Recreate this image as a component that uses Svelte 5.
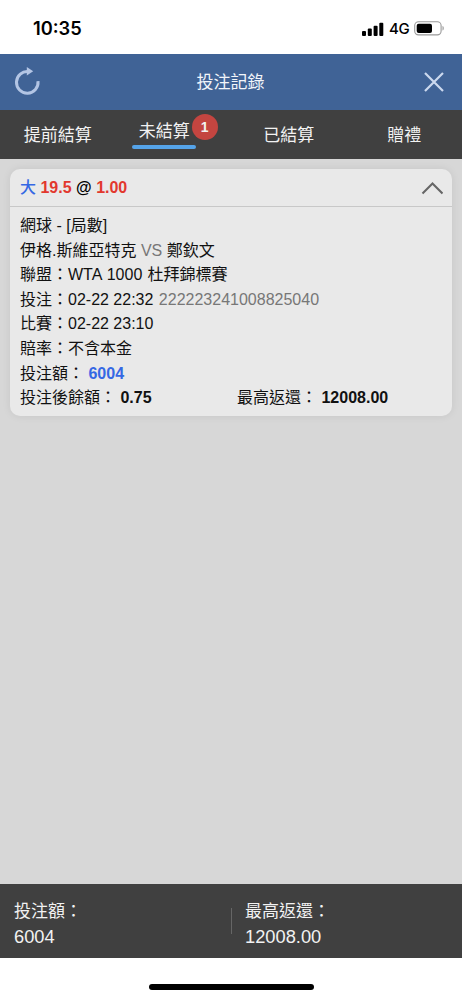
<script>
  const tabs = [
    { label: '提前結算' },
    { label: '未結算', count: 1, active: true },
    { label: '已結算' },
    { label: '贈禮' }
  ];
  const totals = [
    { label: '投注額：', value: '6004' },
    { label: '最高返還：', value: '12008.00' }
  ];
</script>

<div class="screen">
  <div class="status">
    <span class="time">10:35</span>
    <div class="indicators">
      <svg class="signal" width="22" height="14" viewBox="0 0 22 14">
        <rect x="0" y="9" width="4" height="5" rx="1" />
        <rect x="5.8" y="6.5" width="4" height="7.5" rx="1" />
        <rect x="11.6" y="3.7" width="4" height="10.3" rx="1" />
        <rect x="17.3" y="0.8" width="4" height="13.2" rx="1" />
      </svg>
      <span class="network">4G</span>
      <svg width="31" height="15" viewBox="0 0 31 15">
        <rect x="0.7" y="0.7" width="26.4" height="13.2" rx="3.8" fill="none" stroke="#999" stroke-width="1.1" />
        <rect x="2.7" y="2.7" width="15.3" height="9.2" rx="2" />
        <path d="M28.5 5.1c1.7.6 1.7 3.9 0 4.5z" fill="#999" />
      </svg>
    </div>
  </div>

  <header>
    <svg width="28" height="30" viewBox="0 0 28 30">
      <path d="M15.6 4.7A10.8 10.8 0 1 0 25 14.2" fill="none" stroke="#b3c5e4" stroke-width="3" />
      <path d="M13.8 0L20.2 4.2L13.8 8.6Z" fill="#b3c5e4" />
    </svg>
    <h1>投注記錄</h1>
    <svg width="20" height="20" viewBox="0 0 20 20">
      <path d="M1 1L19 19M19 1L1 19" stroke="#ccd9ef" stroke-width="2.2" />
    </svg>
  </header>

  <nav>
    {#each tabs as tab}
      <div class="tab" class:active={tab.active}>
        <span class="label">{tab.label}{#if tab.count}<b class="badge">{tab.count}</b>{/if}</span>
        {#if tab.active}<i class="marker"></i>{/if}
      </div>
    {/each}
  </nav>

  <main>
    <article>
      <div class="head">
        <div><b class="pick">大</b> <b class="red">19.5</b> <b class="at">@</b> <b class="red">1.00</b></div>
        <svg width="22" height="14" viewBox="0 0 22 14">
          <path d="M1.5 12.6L11.5 2.4L21.5 12.6" fill="none" stroke="#666" stroke-width="2.1" />
        </svg>
      </div>
      <div class="details">
        <p>網球 - [局數]</p>
        <p>伊格.斯維亞特克 <span class="muted">VS</span> 鄭欽文</p>
        <p class="league">聯盟：WTA 1000 杜拜錦標賽</p>
        <p>投注：02-22 22:32 <span class="muted number">222223241008825040</span></p>
        <p>比賽：02-22 23:10</p>
        <p>賠率：不含本金</p>
        <p>投注額： <b class="stake">6004</b></p>
        <div class="split">
          <p>投注後餘額： <b>0.75</b></p>
          <p>最高返還： <b>12008.00</b></p>
        </div>
      </div>
    </article>
  </main>

  <footer>
    {#each totals as total}
      <div class="total">
        <span class="caption">{total.label}</span>
        <span class="amount">{total.value}</span>
      </div>
    {/each}
  </footer>
  <div class="home"><i></i></div>
</div>

<style>
  :global(body) {
    margin: 0;
    background: #fff;
  }
  .screen {
    display: flex;
    flex-direction: column;
    width: 462px;
    height: 1000px;
    overflow: hidden;
    font-family: "Liberation Sans", "Noto Sans CJK TC", sans-serif;
    font-size: 16px;
    color: #111;
  }
  .status {
    display: flex;
    justify-content: space-between;
    height: 54px;
    padding: 0 17px 0 33px;
    box-sizing: border-box;
    color: #000;
    font-family: Inter, sans-serif;
  }
  .time {
    font-size: 18.3px;
    font-weight: 600;
    line-height: 57px;
  }
  .indicators {
    display: flex;
    align-items: center;
    height: 57px;
  }
  .network {
    width: 20px;
    margin: 0 5px 0 5px;
    font-size: 15px;
    font-weight: 500;
    letter-spacing: -0.4px;
    white-space: nowrap;
  }
  header {
    display: flex;
    align-items: center;
    justify-content: space-between;
    height: 56px;
    padding: 0 18px 0 13px;
    background: #406396;
  }
  h1 {
    margin: 0;
    padding-right: 4px;
    padding-top: 1px;
    font-size: 17px;
    font-weight: 400;
    line-height: 24px;
    color: #f2f5fa;
  }
  nav {
    display: grid;
    grid-template-columns: repeat(4, 1fr);
    height: 49px;
    background: #404040;
    color: #f2f2f2;
    font-size: 17px;
  }
  .tab {
    display: flex;
    flex-direction: column;
    align-items: center;
    padding-top: 14px;
  }
  .label {
    position: relative;
    line-height: 24px;
  }
  .active {
    padding-top: 10px;
    padding-right: 18px;
  }
  .marker {
    width: 64px;
    height: 4px;
    border-radius: 2px;
    background: #55a3e8;
  }
  .active .label {
    height: 25px;
  }
  .badge {
    position: absolute;
    left: 53px;
    top: -6px;
    width: 26px;
    height: 26px;
    border-radius: 50%;
    background: #c44540;
    font-size: 14px;
    line-height: 26px;
    text-align: center;
  }
  main {
    flex: 1;
    padding: 10px;
    background: #d7d7d7;
  }
  article {
    height: 247px;
    border-radius: 10px;
    background: #e9e9e9;
    box-shadow: 0 0 8px rgba(0, 0, 0, 0.08);
  }
  .head {
    display: flex;
    align-items: center;
    justify-content: space-between;
    height: 37px;
    padding: 0 9px 0 10px;
    border-bottom: 1px solid #c8c8c8;
  }
  .head div {
    margin-top: -3px;
  }
  .pick {
    color: #3568e4;
    font-weight: 500;
  }
  .at {
    color: #000;
  }
  .red {
    color: #e2382e;
  }
  .details {
    padding: 7px 10px;
  }
  p {
    margin: 0;
    line-height: 24.6px;
    white-space: nowrap;
  }
  .league {
    word-spacing: 0.8px;
  }
  .muted {
    color: #777;
  }
  .number {
    margin-left: 1px;
  }
  .stake {
    color: #3568e4;
  }
  .split {
    display: grid;
    grid-template-columns: 217px 1fr;
  }
  footer {
    display: grid;
    grid-template-columns: 231px 231px;
    align-items: center;
    height: 74px;
    background: #404040;
    color: #f2f2f2;
  }
  .total {
    display: flex;
    flex-direction: column;
    padding-top: 6px;
    padding-left: 14px;
  }
  .total + .total {
    box-sizing: border-box;
    height: 26px;
    padding-left: 13px;
    border-left: 1px solid #666;
    justify-content: center;
  }
  .caption {
    font-size: 17px;
    line-height: 25px;
  }
  .amount {
    font-size: 18.3px;
    line-height: 25px;
  }
  .home {
    display: flex;
    justify-content: center;
    height: 42px;
    background: #fff;
  }
  .home i {
    width: 165px;
    height: 6px;
    margin-top: 26px;
    border-radius: 3px;
    background: #000;
  }
</style>
